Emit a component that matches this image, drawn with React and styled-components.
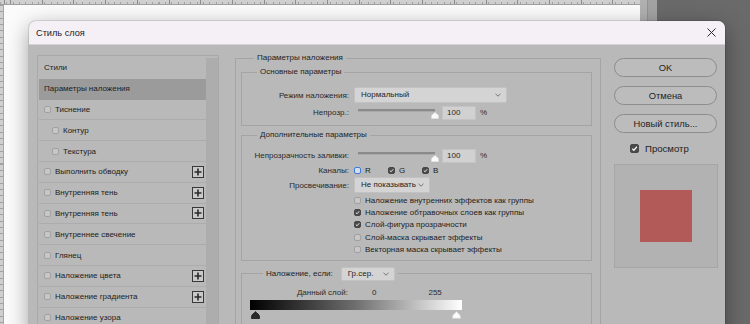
import React from 'react';
import styled, { createGlobalStyle } from 'styled-components';

const Global = createGlobalStyle`
  html, body { margin: 0; padding: 0; }
  body {
    width: 750px; height: 324px; overflow: hidden;
    background: #6a6a6a;
    font-family: "Liberation Sans", Arial, sans-serif;
  }
  #root { width: 750px; height: 324px; }
`;

const Desktop = styled.div`
  position: relative;
  display: flex;
  width: 750px;
  height: 324px;
  overflow: hidden;
  background: #6a6a6a;
`;

const DocArea = styled.div`
  flex: none;
  width: 640px;
  display: flex;
  flex-direction: column;
`;

const TopRuler = styled.div`
  flex: none;
  height: 4px;
  background-color: #cfcfcf;
  background-image:
    repeating-linear-gradient(to right, #8c8c8c 0 1px, transparent 1px 31.7px),
    repeating-linear-gradient(to right, #a4a4a4 0 1px, transparent 1px 6.34px);
  background-size: 100% 100%, 100% 2px;
  background-position: 10px 0, 0 100%;
  background-repeat: repeat-x;
  border-bottom: 1px solid #a0a0a0;
`;

const DocRow = styled.div`
  flex: 1;
  display: flex;
`;

const SideRuler = styled.div`
  flex: none;
  width: 3px;
  background-color: #cfcfcf;
  background-image: repeating-linear-gradient(to bottom, #a0a0a0 0 1px, transparent 1px 6.34px);
  border-right: 1px solid #a8a8a8;
`;

const Canvas = styled.div`
  flex: 1;
  background: #fbfbfb;
`;

const Strip = styled.div`
  flex: none;
  width: 17px;
  background: linear-gradient(to right, #b0b0b0 0 7px, #939393 7px 8px, #a3a3a3 8px);
`;

const Dark = styled.div`
  flex: 1;
  background: #6a6a6a;
`;

/* ---------- dialog ---------- */

const Dialog = styled.div`
  position: absolute;
  left: 29px;
  top: 21px;
  width: 696px;
  height: 330px;
  display: flex;
  flex-direction: column;
  background: #b9b9b9;
  border-radius: 7px 7px 0 0;
  overflow: hidden;
  box-shadow: 0 6px 22px rgba(0, 0, 0, 0.38), 0 0 0 1px rgba(0, 0, 0, 0.1);
`;

const TitleBar = styled.div`
  flex: none;
  height: 24px;
  box-sizing: border-box;
  display: flex;
  align-items: center;
  justify-content: space-between;
  padding: 0 9px 0 7px;
  background: #f4f0f6;
  border-bottom: 1px solid #d6d3d8;
  color: #1b1b1b;
  font-size: 9.2px;
`;

const CloseBtn = styled.span`
  display: flex;
  width: 9px;
  height: 9px;
`;

const Body = styled.div`
  flex: 1;
  display: flex;
  align-items: stretch;
  padding: 8px 7px 0 8px;
  color: #222;
  font-size: 8px;
`;

/* left panel */

const LeftPanel = styled.div`
  flex: none;
  width: 182px;
  margin-top: 2px;
  box-sizing: border-box;
  display: flex;
  border: 1px solid #a9a9a9;
  border-bottom: none;
  padding: 2px 0 0 1px;
`;

const StyleList = styled.div`
  flex: 1;
  display: flex;
  flex-direction: column;
`;

const ScrollTrack = styled.div`
  flex: none;
  width: 12px;
  background: #adadad;
`;

const StyleRow = styled.div`
  flex: none;
  height: 20.8px;
  box-sizing: border-box;
  display: flex;
  align-items: center;
  gap: 4px;
  padding-left: ${(p) => (p.$indent ? 13 : 5)}px;
  padding-right: 2px;
  background: ${(p) => (p.$active ? '#9b9b9b' : 'transparent')};
  border-bottom: 1px solid ${(p) => (p.$plain ? 'transparent' : '#acacac')};
  color: #222;
  font-size: 8px;
  white-space: nowrap;
`;

const PlusBox = styled.span`
  margin-left: auto;
  width: 12px;
  height: 12px;
  box-sizing: border-box;
  display: flex;
  align-items: center;
  justify-content: center;
  border: 1.5px solid #383838;
  background: #c9c9c9;
`;

/* checkboxes */

const Box = styled.span`
  flex: none;
  width: ${(p) => p.$size}px;
  height: ${(p) => p.$size}px;
  box-sizing: border-box;
  display: inline-flex;
  align-items: center;
  justify-content: center;
  border-radius: 2px;
  border: 1px solid
    ${(p) => (p.$focus ? '#3d7be0' : p.$checked ? '#474747' : '#a1a1a1')};
  background: ${(p) => (p.$focus ? '#d8dde6' : p.$checked ? '#4a4a4a' : '#c7c7c7')};
`;

function Check({ checked, focus, size = 7 }) {
  return (
    <Box $checked={checked} $focus={focus} $size={size}>
      {checked && (
        <svg width={size - 2} height={size - 2} viewBox="0 0 8 8">
          <path d="M1.4 4.2 L3.3 6 L6.7 2" fill="none" stroke="#f2f2f2" strokeWidth="1.5" />
        </svg>
      )}
    </Box>
  );
}

/* main column */

const MainColumn = styled.div`
  flex: none;
  width: 366px;
  margin: 0 13px 0 16px;
`;

const OuterSet = styled.fieldset`
  margin: 0;
  min-width: 0;
  height: 320px;
  box-sizing: border-box;
  border: 1px solid #a4a4a4;
  padding: 4px 8px 0 5px;
`;

const Legend = styled.legend`
  margin-left: ${(p) => p.$offset}px;
  padding: 0 3px;
  height: 10px;
  line-height: 10px;
  font-size: 8px;
  color: #1e1e1e;
  display: ${(p) => (p.$row ? 'flex' : 'block')};
  align-items: center;
  gap: 8px;
  ${(p) => (p.$row ? 'height: 14px; line-height: 14px;' : '')}
`;

const GroupSet = styled.fieldset`
  margin: ${(p) => p.$top}px 0 0 0;
  min-width: 0;
  border: 1px solid #a4a4a4;
  padding: 0;
  ${(p) => (p.$open ? 'height: 120px;' : '')}
`;

const FormGrid = styled.div`
  display: grid;
  grid-template-columns: 107px auto;
  column-gap: 5px;
  row-gap: ${(p) => p.$rowGap || 0}px;
  align-items: center;
  padding: ${(p) => p.$pad};
`;

const Label = styled.span`
  text-align: right;
  color: #2a2a2a;
  white-space: nowrap;
`;

const Select = styled.div`
  width: ${(p) => p.$w}px;
  height: ${(p) => p.$h || 16}px;
  box-sizing: border-box;
  display: flex;
  align-items: center;
  justify-content: space-between;
  padding: 0 5px 0 6px;
  background: #d4d4d4;
  border: 1px solid #c2c2c2;
  border-radius: 2px;
  color: #1e1e1e;
  font-size: 8px;
  line-height: 1;
  white-space: nowrap;
`;

function Chevron() {
  return (
    <svg width="6" height="4" viewBox="0 0 6 4">
      <path d="M0.5 0.8 L3 3.2 L5.5 0.8" fill="none" stroke="#6a6a6a" strokeWidth="0.9" />
    </svg>
  );
}

const SliderRow = styled.div`
  height: 15px;
  display: flex;
  align-items: center;
`;

const Slider = styled.div`
  width: 77px;
  height: 15px;
  margin-left: 4px;
  display: flex;
  flex-direction: column;
`;

const Track = styled.div`
  height: 2px;
  margin-top: 4px;
  background: #8a8a8a;
  border-bottom: 1px solid #a9a9a9;
`;

const ThumbUp = styled.svg`
  align-self: flex-end;
  margin-right: -4px;
`;

const NumInput = styled.div`
  width: 34px;
  height: 14px;
  box-sizing: border-box;
  margin-left: 7px;
  padding-left: 4px;
  display: flex;
  align-items: center;
  background: #d1d1d1;
  border: 1px solid #c4c4c4;
  color: #1e1e1e;
  font-size: 8px;
`;

const Unit = styled.span`
  margin-left: 4px;
  color: #2a2a2a;
`;

const ChannelRow = styled.div`
  height: 14px;
  display: flex;
  align-items: center;
`;

const Channel = styled.span`
  width: 34px;
  display: flex;
  align-items: center;
  gap: 4px;
`;

const OptionList = styled.div`
  grid-column: 2;
  display: flex;
  flex-direction: column;
  padding-top: 1px;
`;

const Option = styled.div`
  height: 12.4px;
  display: flex;
  align-items: center;
  gap: 4px;
  white-space: nowrap;
  color: #222;
`;

const BlendBody = styled.div`
  padding: 7px 0 0 8px;
  display: flex;
  flex-direction: column;
`;

const LayerRow = styled.div`
  height: 10px;
  display: flex;
  align-items: center;
  margin-left: -8px;
  color: #2a2a2a;
`;

const LayerLabel = styled.span`
  width: 106px;
  text-align: right;
`;

const LayerValue = styled.span`
  margin-left: ${(p) => p.$ml}px;
`;

const GradientBar = styled.div`
  width: 212px;
  height: 10px;
  margin-top: 2px;
  background: linear-gradient(to right, #000 0%, #6f6f6f 50%, #fff 100%);
`;

const ThumbRow = styled.div`
  width: 212px;
  height: 9px;
  margin-top: 1px;
  display: flex;
  justify-content: space-between;
  padding: 0 1px;
  box-sizing: border-box;
`;

function Drop({ fill, stroke }) {
  return (
    <svg width="9" height="8" viewBox="0 0 9 8">
      <path
        d="M4.5 0.5 C5.5 2 8.5 3.5 8.5 5.5 V7.5 H0.5 V5.5 C0.5 3.5 3.5 2 4.5 0.5 Z"
        fill={fill}
        stroke={stroke}
        strokeWidth="0.8"
      />
    </svg>
  );
}

/* right column */

const RightColumn = styled.div`
  flex: none;
  width: 104px;
  padding-top: 5px;
  display: flex;
  flex-direction: column;
`;

const PillButton = styled.div`
  height: 19px;
  box-sizing: border-box;
  margin-bottom: 9px;
  margin-right: 1px;
  display: flex;
  align-items: center;
  justify-content: center;
  border: 1px solid #8d8d8d;
  border-radius: 10px;
  background: #bcbcbc;
  color: #1e1e1e;
  font-size: 9.4px;
`;

const PreviewToggle = styled.div`
  height: 11px;
  margin-top: 1px;
  padding-left: 16px;
  display: flex;
  align-items: center;
  gap: 6px;
  color: #1e1e1e;
  font-size: 9.6px;
`;

const PreviewBox = styled.div`
  margin-top: 10px;
  height: 104px;
  box-sizing: border-box;
  display: flex;
  align-items: center;
  justify-content: center;
  background: #b2b2b2;
  border: 1px solid #a6a6a6;
`;

const Swatch = styled.div`
  width: 52px;
  height: 52px;
  background: #b15a57;
`;

const styleItems = [
  { label: 'Тиснение' },
  { label: 'Контур', indent: true },
  { label: 'Текстура', indent: true },
  { label: 'Выполнить обводку', plus: true },
  { label: 'Внутренняя тень', plus: true },
  { label: 'Внутренняя тень', plus: true },
  { label: 'Внутреннее свечение' },
  { label: 'Глянец' },
  { label: 'Наложение цвета', plus: true },
  { label: 'Наложение градиента', plus: true },
  { label: 'Наложение узора' },
];

const options = [
  { label: 'Наложение внутренних эффектов как группы', checked: false },
  { label: 'Наложение обтравочных слоев как группы', checked: true },
  { label: 'Слой-фигура прозрачности', checked: true },
  { label: 'Слой-маска скрывает эффекты', checked: false },
  { label: 'Векторная маска скрывает эффекты', checked: false },
];

function Plus() {
  return (
    <PlusBox>
      <svg width="8" height="8" viewBox="0 0 8 8">
        <path d="M4 0.5 V7.5 M0.5 4 H7.5" stroke="#2a2a2a" strokeWidth="1.6" />
      </svg>
    </PlusBox>
  );
}

function OpacitySlider() {
  return (
    <SliderRow>
      <Slider>
        <Track />
        <ThumbUp width="8" height="7" viewBox="0 0 8 7">
          <path d="M4 0.3 L7.6 3.4 V6.7 H0.4 V3.4 Z" fill="#fafafa" stroke="#d8d8d8" strokeWidth="0.6" />
        </ThumbUp>
      </Slider>
      <NumInput>100</NumInput>
      <Unit>%</Unit>
    </SliderRow>
  );
}

export default function App() {
  return (
    <>
      <Global />
      <Desktop>
        <DocArea>
          <TopRuler />
          <DocRow>
            <SideRuler />
            <Canvas />
          </DocRow>
        </DocArea>
        <Strip />
        <Dark />

        <Dialog>
          <TitleBar>
            <span>Стиль слоя</span>
            <CloseBtn>
              <svg width="9" height="9" viewBox="0 0 9 9">
                <path d="M0.5 0.5 L8.5 8.5 M8.5 0.5 L0.5 8.5" stroke="#2b2b2b" strokeWidth="1" />
              </svg>
            </CloseBtn>
          </TitleBar>

          <Body>
            <LeftPanel>
              <StyleList>
                <StyleRow $plain>Стили</StyleRow>
                <StyleRow $active $plain>Параметры наложения</StyleRow>
                {styleItems.map((it, i) => (
                  <StyleRow key={i} $indent={it.indent}>
                    <Check />
                    <span>{it.label}</span>
                    {it.plus && <Plus />}
                  </StyleRow>
                ))}
              </StyleList>
              <ScrollTrack />
            </LeftPanel>

            <MainColumn>
              <OuterSet>
                <Legend $offset={13}>Параметры наложения</Legend>

                <GroupSet $top={0}>
                  <Legend $offset={15}>Основные параметры</Legend>
                  <FormGrid $pad="10px 0 5px 0" $rowGap={2}>
                    <Label>Режим наложения:</Label>
                    <Select $w={153}>
                      <span>Нормальный</span>
                      <Chevron />
                    </Select>
                    <Label>Непрозр.:</Label>
                    <OpacitySlider />
                  </FormGrid>
                </GroupSet>

                <GroupSet $top={4}>
                  <Legend $offset={15}>Дополнительные параметры</Legend>
                  <FormGrid $pad="8px 0 4px 0">
                    <Label>Непрозрачность заливки:</Label>
                    <OpacitySlider />
                    <Label>Каналы:</Label>
                    <ChannelRow>
                      <Channel>
                        <Check focus />
                        <span>R</span>
                      </Channel>
                      <Channel>
                        <Check checked />
                        <span>G</span>
                      </Channel>
                      <Channel>
                        <Check checked />
                        <span>B</span>
                      </Channel>
                    </ChannelRow>
                    <Label>Просвечивание:</Label>
                    <Select $w={76}>
                      <span>Не показывать</span>
                      <Chevron />
                    </Select>
                    <OptionList>
                      {options.map((o) => (
                        <Option key={o.label}>
                          <Check checked={o.checked} />
                          <span>{o.label}</span>
                        </Option>
                      ))}
                    </OptionList>
                  </FormGrid>
                </GroupSet>

                <GroupSet $top={6} $open>
                  <Legend $offset={21} $row>
                    <span>Наложение, если:</span>
                    <Select $w={54} $h={14}>
                      <span>Гр.сер.</span>
                      <Chevron />
                    </Select>
                  </Legend>
                  <BlendBody>
                    <LayerRow>
                      <LayerLabel>Данный слой:</LayerLabel>
                      <LayerValue $ml={24}>0</LayerValue>
                      <LayerValue $ml={52}>255</LayerValue>
                    </LayerRow>
                    <GradientBar />
                    <ThumbRow>
                      <Drop fill="#2a2a2a" stroke="#1a1a1a" />
                      <Drop fill="#fafafa" stroke="#d0d0d0" />
                    </ThumbRow>
                  </BlendBody>
                </GroupSet>
              </OuterSet>
            </MainColumn>

            <RightColumn>
              <PillButton>OK</PillButton>
              <PillButton>Отмена</PillButton>
              <PillButton>Новый стиль...</PillButton>
              <PreviewToggle>
                <Check checked size={9} />
                <span>Просмотр</span>
              </PreviewToggle>
              <PreviewBox>
                <Swatch />
              </PreviewBox>
            </RightColumn>
          </Body>
        </Dialog>
      </Desktop>
    </>
  );
}
